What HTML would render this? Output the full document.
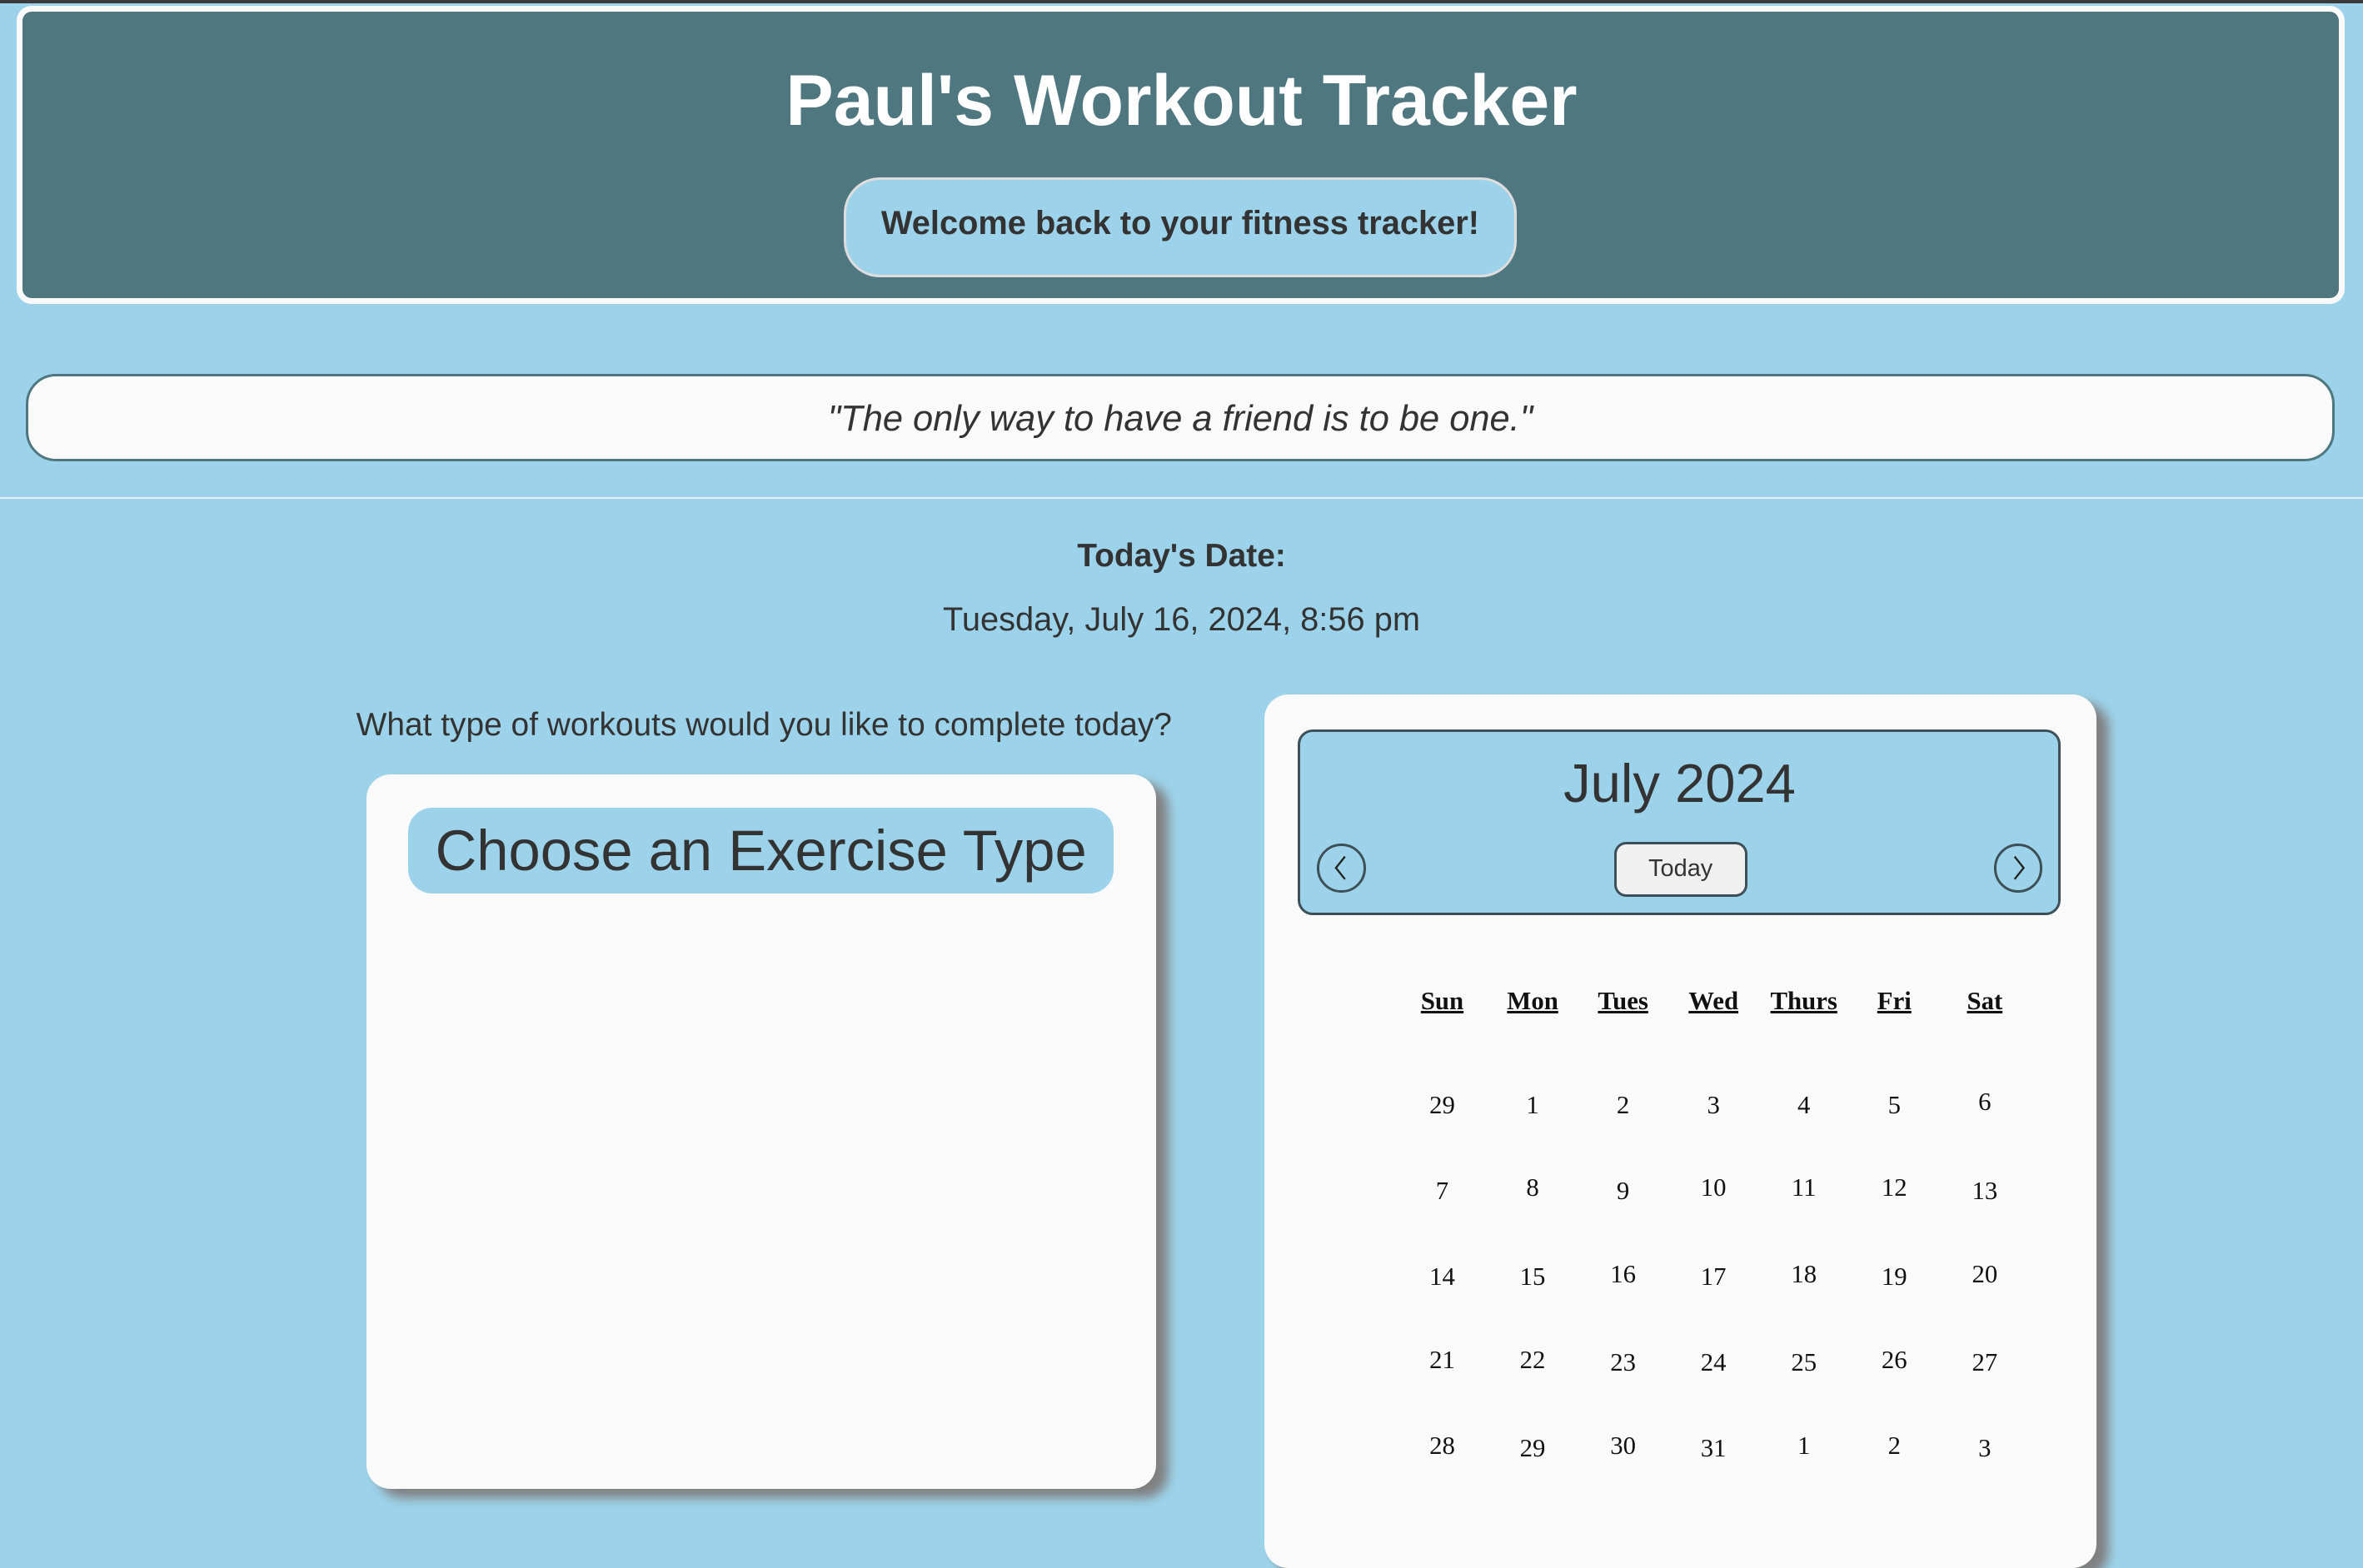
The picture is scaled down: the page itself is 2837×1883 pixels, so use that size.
<!DOCTYPE html>
<html><head><meta charset="utf-8"><style>
html,body{margin:0;padding:0;}
body{width:2837px;height:1802px;overflow:hidden;background:#9dd3ea;}
#w{position:relative;width:1568px;height:996px;zoom:1.80931;font-family:"Liberation Sans",Arial,sans-serif;color:#333;}
.a{position:absolute;}
.c{text-align:center;}
#topbar{left:0;top:0;width:1568px;height:2px;background:#3a3a3a;}
#hdr{left:11px;top:4px;width:1537px;height:190px;background:#4f7780;border:4px solid #fafafa;border-radius:10px;}
#title{left:0;top:40px;width:1568px;font-size:47.5px;color:#fff;font-weight:bold;}
#wel{left:560px;top:118px;width:443px;height:63px;background:#9dd3ea;border:2px solid #ddd;border-radius:24px;font-weight:bold;font-size:22px;line-height:58px;}
#quote{left:17px;top:248px;width:1529px;height:55px;background:#fafafa;border:2px solid #4f7780;border-radius:20px;font-style:italic;font-size:24px;line-height:57px;}
#hr{left:0;top:330px;width:1568px;height:1px;background:#e6f2f7;}
.card{background:#fafafa;border-radius:16px;box-shadow:8px 6px 7px #808080;}
#cal{left:861px;top:484px;width:503px;height:120px;background:#9dd3ea;border:2px solid #3d4f57;border-radius:10px;}
.circ{width:29px;height:29px;border:2px solid #3d4f57;border-radius:50%;}
.wd{font-family:"Liberation Serif",Georgia,serif;font-weight:bold;font-size:17px;text-decoration:underline;color:#111;width:60px;}
.dn{font-family:"Liberation Serif",Georgia,serif;font-size:17px;color:#111;width:60px;}
</style></head><body><div id="w">
<div class="a" id="topbar"></div>
<div class="a" id="hdr"></div>
<div class="a c" id="title">Paul's Workout Tracker</div>
<div class="a c" id="wel">Welcome back to your fitness tracker!</div>
<div class="a c" id="quote">"The only way to have a friend is to be one."</div>
<div class="a" id="hr"></div>
<div class="a c" style="left:0;top:357px;width:1568px;font-size:21.5px;font-weight:bold;">Today's Date:</div>
<div class="a c" style="left:0;top:399px;width:1568px;font-size:22px;">Tuesday, July 16, 2024, 8:56 pm</div>
<div class="a c" style="left:180px;top:469px;width:654px;font-size:21.5px;">What type of workouts would you like to complete today?</div>
<div class="a card" style="left:243px;top:514px;width:524px;height:474px;"></div>
<div class="a c" style="left:271px;top:536px;width:468px;height:57px;background:#9dd3ea;border-radius:16px;font-size:38px;line-height:58px;">Choose an Exercise Type</div>
<div class="a card" style="left:839px;top:461px;width:552px;height:580px;"></div>
<div class="a" id="cal"></div>
<div class="a c" style="left:861px;top:499px;width:507px;font-size:36px;">July 2024</div>
<div class="a c" style="left:1071px;top:559px;width:85px;height:33px;background:#f0f0f0;border:2px solid #3d4f57;border-radius:8px;font-size:16px;line-height:33px;">Today</div>
<div class="a circ" style="left:874px;top:560px;"><svg width="29" height="29" viewBox="0 0 29 29"><path d="M17 7 L11 14.5 L17 22" fill="none" stroke="#222" stroke-width="1.3"/></svg></div>
<div class="a circ" style="left:1323px;top:560px;"><svg width="29" height="29" viewBox="0 0 29 29"><path d="M12 7 L18 14.5 L12 22" fill="none" stroke="#222" stroke-width="1.3"/></svg></div>
<div class="a c wd" style="left:927px;top:655px;">Sun</div>
<div class="a c wd" style="left:987px;top:655px;">Mon</div>
<div class="a c wd" style="left:1047px;top:655px;">Tues</div>
<div class="a c wd" style="left:1107px;top:655px;">Wed</div>
<div class="a c wd" style="left:1167px;top:655px;">Thurs</div>
<div class="a c wd" style="left:1227px;top:655px;">Fri</div>
<div class="a c wd" style="left:1287px;top:655px;">Sat</div>

<div class="a c dn" style="left:927px;top:724px">29</div><div class="a c dn" style="left:987px;top:724px">1</div><div class="a c dn" style="left:1047px;top:724px">2</div><div class="a c dn" style="left:1107px;top:724px">3</div><div class="a c dn" style="left:1167px;top:724px">4</div><div class="a c dn" style="left:1227px;top:724px">5</div><div class="a c dn" style="left:1287px;top:722px">6</div>
<div class="a c dn" style="left:927px;top:781px">7</div><div class="a c dn" style="left:987px;top:779px">8</div><div class="a c dn" style="left:1047px;top:781px">9</div><div class="a c dn" style="left:1107px;top:779px">10</div><div class="a c dn" style="left:1167px;top:779px">11</div><div class="a c dn" style="left:1227px;top:779px">12</div><div class="a c dn" style="left:1287px;top:781px">13</div>
<div class="a c dn" style="left:927px;top:838px">14</div><div class="a c dn" style="left:987px;top:838px">15</div><div class="a c dn" style="left:1047px;top:836px">16</div><div class="a c dn" style="left:1107px;top:838px">17</div><div class="a c dn" style="left:1167px;top:836px">18</div><div class="a c dn" style="left:1227px;top:838px">19</div><div class="a c dn" style="left:1287px;top:836px">20</div>
<div class="a c dn" style="left:927px;top:893px">21</div><div class="a c dn" style="left:987px;top:893px">22</div><div class="a c dn" style="left:1047px;top:895px">23</div><div class="a c dn" style="left:1107px;top:895px">24</div><div class="a c dn" style="left:1167px;top:895px">25</div><div class="a c dn" style="left:1227px;top:893px">26</div><div class="a c dn" style="left:1287px;top:895px">27</div>
<div class="a c dn" style="left:927px;top:950px">28</div><div class="a c dn" style="left:987px;top:952px">29</div><div class="a c dn" style="left:1047px;top:950px">30</div><div class="a c dn" style="left:1107px;top:952px">31</div><div class="a c dn" style="left:1167px;top:950px">1</div><div class="a c dn" style="left:1227px;top:950px">2</div><div class="a c dn" style="left:1287px;top:952px">3</div>
</div></body></html>
